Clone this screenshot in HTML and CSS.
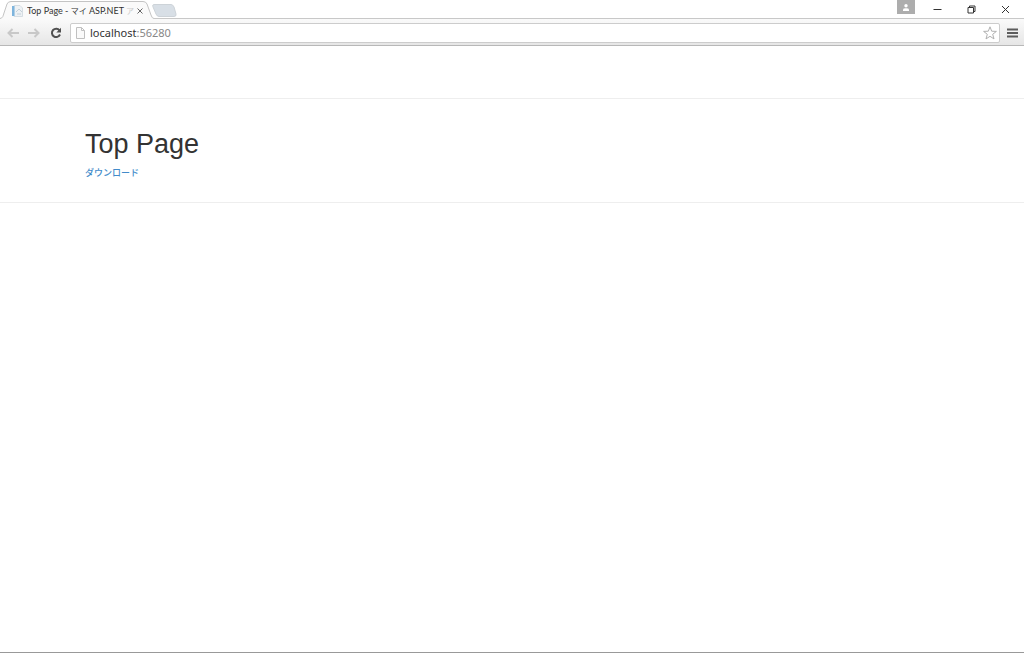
FILE: index.html
```
<!DOCTYPE html>
<html lang="ja">
<head>
  <meta charset="utf-8">
  <title>Top Page</title>
  <link rel="stylesheet" href="styles.css">
</head>
<body>
  <div class="window">
    <!-- Title bar -->
    <div class="titlebar">
      <div class="tab">
        <svg class="tab-shape" width="154" height="19" viewBox="0 0 154 19">
          <path d="M0 18.500C3 18 3 16 4 13L7 4Q8 1.500 11 1.500H143Q146 1.500 147 4L151 15Q152 18.500 154 18.500V19H0Z" fill="#fafafa"/>
          <path d="M0 18.500C3 18 3 16 4 13L7 4Q8 1.500 11 1.500H143Q146 1.500 147 4L151 15Q152 18.500 154 18.500" fill="none" stroke="#c4c4c4"/>
        </svg>
        <svg class="favicon" width="11" height="12" viewBox="0 0 11 12">
          <path d="M2 .5H8L10.500 3V11.500H2Z" fill="#edf1f4" stroke="#d5dde3"/>
          <path d="M0 1H2.500V11H0Z" fill="#7db4dd"/>
          <path d="M4 7L7 4L10 7M5 9H9" fill="none" stroke="#c3d0d9"/>
        </svg>
        <span class="tab-title">Top Page - <span class="kana">マイ</span> ASP.NET <span class="kana fade">ア</span></span>
        <button class="tab-close" aria-label="Close tab">
          <svg width="6" height="6" viewBox="0 0 6 6"><path d="M.5.5L5.500 5.500M5.500.5L.5 5.500" stroke="#666"/></svg>
        </button>
      </div>
      <button class="new-tab" aria-label="New tab">
        <svg width="25" height="13" viewBox="0 0 25 13"><path d="M2 .5H19Q21 .5 22 3L24 10Q24.500 12.500 22 12.500H7Q5 12.500 4 10L.8 2.500Q.3.5 2 .5Z" fill="#d8dfe6" stroke="#cdd3d8"/></svg>
      </button>
      <div class="window-buttons">
        <button class="user" aria-label="User">
          <svg width="8" height="7" viewBox="0 0 8 7"><circle cx="4" cy="1.800" r="1.700" fill="#fff"/><path d="M1 7V5.500Q1 4.200 4 4.200T7 5.500V7Z" fill="#fff"/></svg>
        </button>
        <button class="window-button" aria-label="Minimize">
          <svg width="9" height="9" viewBox="0 0 9 9"><path d="M.5 4.500H8.500" stroke="#333"/></svg>
        </button>
        <button class="window-button" aria-label="Restore">
          <svg width="9" height="9" viewBox="0 0 9 9"><path d="M1 2.500H6.500V8H1ZM2.500 2.500V1H8V6.500H6.500" fill="none" stroke="#333"/></svg>
        </button>
        <button class="window-button" aria-label="Close">
          <svg width="9" height="9" viewBox="0 0 9 9"><path d="M1 1L8 8M8 1L1 8" stroke="#333"/></svg>
        </button>
      </div>
    </div>

    <!-- Toolbar -->
    <div class="toolbar">
      <button class="tool" aria-label="Back">
        <svg width="12" height="10" viewBox="0 0 12 10"><path d="M5.500 1L1.500 5L5.500 9M1.500 5H12" fill="none" stroke="#c8c8c8" stroke-width="2"/></svg>
      </button>
      <button class="tool" aria-label="Forward">
        <svg width="12" height="10" viewBox="0 0 12 10"><path d="M6.500 1L10.500 5L6.500 9M10.500 5H0" fill="none" stroke="#c8c8c8" stroke-width="2"/></svg>
      </button>
      <button class="tool" aria-label="Reload">
        <svg width="12" height="12" viewBox="0 0 12 12"><path d="M9.500 3.300A4.200 4.200 0 1 0 10 7.500" fill="none" stroke="#505050" stroke-width="2"/><path d="M11 .8V5.500H6.300Z" fill="#505050"/></svg>
      </button>
      <label class="address">
        <svg width="9" height="12" viewBox="0 0 9 12"><path d="M.5.5H5.500L8.500 3.500V11.500H.5ZM5.500.5V3.500H8.500" fill="#fafafa" stroke="#c0c0c0"/></svg>
        <span class="url">localhost<span class="port">:56280</span></span>
        <svg width="14" height="14" viewBox="0 0 14 14"><path d="M7 .8L8.700 5.200L13.400 5.400L9.700 8.300L11 12.900L7 10.300L3 12.900L4.300 8.300L.6 5.400L5.300 5.200Z" fill="#fff" stroke="#b0b0b0"/></svg>
      </label>
      <button class="menu" aria-label="Menu">
        <svg width="11" height="10" viewBox="0 0 11 10"><path d="M0 1.500H11M0 5H11M0 8.500H11" stroke="#5c5c5c" stroke-width="2.200"/></svg>
      </button>
    </div>

    <!-- Page -->
    <div class="page">
      <div class="navbar"></div>
      <main class="content">
        <div class="container">
          <h1>Top Page</h1>
          <a class="download" href="#">ダウンロード</a>
        </div>
      </main>
    </div>
  </div>
</body>
</html>
```
FILE: styles.css
```
* {
  box-sizing: border-box;
}

body {
  margin: 0;
  background: #fff;
  font-family: "Noto Sans", "Noto Sans CJK JP", sans-serif;
}

button {
  display: flex;
  align-items: center;
  justify-content: center;
  padding: 0;
  border: 0;
  background: none;
}

svg {
  display: block;
  flex: none;
}

.window {
  display: flex;
  flex-direction: column;
  min-height: 100vh;
  border-bottom: 1px solid #999;
}

/* Title bar */
.titlebar {
  display: flex;
  height: 18px;
}

.tab {
  position: relative;
  display: flex;
  align-items: center;
  width: 152px;
  height: 19px;
  padding: 2px 8px 0 12px;
}

.tab-shape {
  position: absolute;
  top: 0;
  left: 0;
}

.favicon,
.tab-title,
.tab-close {
  position: relative;
}

.tab-title {
  flex: 1;
  margin-left: 4px;
  overflow: hidden;
  color: #333;
  font-family: Lato, "Noto Sans CJK JP", sans-serif;
  font-size: 9px;
  line-height: 14px;
  white-space: nowrap;
}

.kana {
  font-size: 8px;
}

.fade {
  color: #ccc;
}

.tab-close {
  width: 8px;
  height: 12px;
}

.new-tab {
  width: 25px;
  height: 13px;
  margin-top: 4px;
}

.window-buttons {
  display: flex;
  margin-left: auto;
  padding-right: 2px;
}

.user {
  width: 18px;
  height: 14px;
  margin-right: 5px;
  background: #adadad;
}

.window-button {
  width: 34px;
  height: 18px;
}

/* Toolbar */
.toolbar {
  display: flex;
  align-items: center;
  height: 28px;
  padding: 1px 6px 0;
  border-top: 1px solid #c8c8c8;
  border-bottom: 1px solid #b8b8b8;
  background: linear-gradient(#fafafa, #e6e6e6);
}

.tool {
  width: 22px;
  height: 22px;
}

.tool:first-child {
  width: 14px;
}

.tool:nth-child(2) {
  width: 28px;
}

.tool:nth-child(3) {
  width: 16px;
  margin-right: 6px;
}

.address {
  display: flex;
  flex: 1;
  align-items: center;
  gap: 5px;
  height: 20px;
  padding: 0 2px 0 5px;
  border: 1px solid #ccc;
  border-radius: 2px;
  background: #fff;
}

.url {
  flex: 1;
  color: #333;
  font-size: 11px;
  line-height: 18px;
}

.port {
  color: #888;
}

.menu {
  width: 12px;
  height: 20px;
  margin-left: 6px;
}

/* Page */
.page {
  flex: 1;
}

.navbar {
  height: 53px;
  border-bottom: 1px solid #eee;
}

.content {
  padding: 29px 0 20px;
  border-bottom: 1px solid #eee;
}

.container {
  max-width: 854px;
  margin: 0 auto;
}

h1 {
  margin: 0 0 4px;
  color: #333;
  font-family: "Liberation Sans", Arial, sans-serif;
  font-size: 27px;
  font-weight: 400;
  line-height: 32px;
}

.download {
  display: block;
  width: fit-content;
  color: #428bca;
  font-size: 9px;
  font-weight: 500;
  line-height: 18px;
  text-decoration: none;
}
```
